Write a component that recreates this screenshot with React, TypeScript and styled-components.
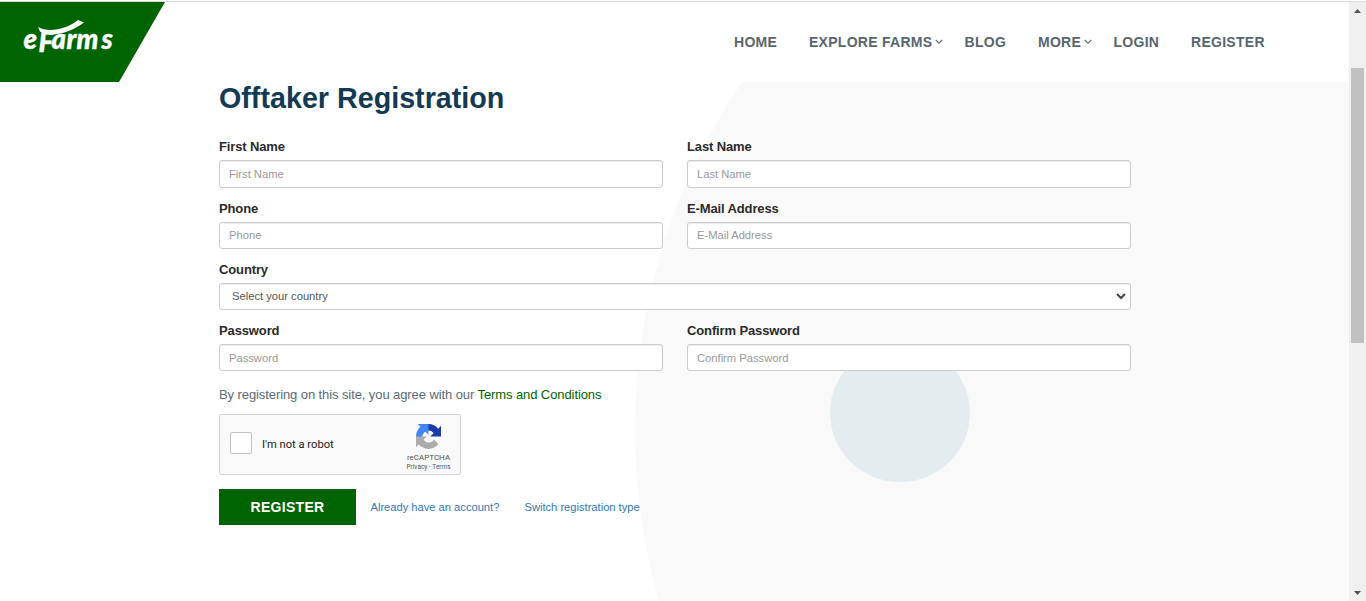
import React from "react";
import styled, { createGlobalStyle } from "styled-components";

const Global = createGlobalStyle`
  * { box-sizing: border-box; }
  html, body { margin: 0; height: 100%; overflow: hidden; }
  body { font-family: "Liberation Sans", Arial, sans-serif; background: #fff; }
  a { text-decoration: none; }
`;

const Window = styled.div`
  display: flex;
  width: 1366px;
  height: 600px;
  margin-top: 1px;
  border-top: 1px solid #dcdcdc;
  overflow: hidden;
`;
const Page = styled.div`
  flex: 1;
  display: flex;
  flex-direction: column;
`;
const Header = styled.header`
  display: flex;
  justify-content: space-between;
  align-items: flex-start;
  height: 80px;
  background: #fff;
`;
const Brand = styled.a`
  display: block;
  width: 165px;
  height: 80px;
  background: #006400;
  clip-path: polygon(0 0, 100% 0, 119px 100%, 0 100%);
`;
const Nav = styled.nav`
  display: flex;
  width: 615px;
  height: 80px;
  align-items: center;
`;
const NavLink = styled.a<{ $w: number }>`
  display: flex;
  align-items: center;
  flex: none;
  width: ${(p) => p.$w}px;
  font-size: 14px;
  font-weight: 700;
  letter-spacing: 0.28px;
  line-height: 20px;
  white-space: nowrap;
  color: #5a666e;
  svg { margin-left: 3px; }
`;
const Main = styled.main`
  position: relative;
  flex: 1;
  overflow: hidden;
`;
const Disc = styled.div<{ $x: number; $y: number; $rx: number; $ry: number; $color: string }>`
  position: absolute;
  left: ${(p) => p.$x - p.$rx}px;
  top: ${(p) => p.$y - p.$ry}px;
  width: ${(p) => p.$rx * 2}px;
  height: ${(p) => p.$ry * 2}px;
  border-radius: 50%;
  background: ${(p) => p.$color};
`;
const Form = styled.form`
  position: relative;
  width: 912px;
  margin-left: 219px;
`;
const Title = styled.h1`
  margin: 0 0 23px;
  height: 32px;
  line-height: 32px;
  font-size: 28.7px;
  font-weight: 700;
  color: #133a54;
  white-space: nowrap;
`;
const Fields = styled.div`
  display: grid;
  grid-template-columns: 1fr 1fr;
  column-gap: 24px;
  row-gap: 11px;
`;
const Field = styled.div<{ $wide?: boolean }>`
  grid-column: ${(p) => (p.$wide ? "1 / -1" : "auto")};
  display: flex;
  flex-direction: column;
  gap: 3px;
`;
const Label = styled.label`
  height: 20px;
  line-height: 20px;
  font-size: 13px;
  font-weight: 700;
  letter-spacing: -0.13px;
  color: #2b2b2b;
`;
const Input = styled.input<{ $tall?: boolean; $raised?: boolean }>`
  width: 100%;
  height: ${(p) => (p.$tall ? 28 : 27)}px;
  padding: ${(p) => (p.$raised ? "0 9px 1px" : "0 9px")};
  border: 1px solid #ccc;
  border-radius: 3px;
  background: #fff;
  box-shadow: inset 0 1px 1px rgba(0, 0, 0, 0.075);
  font: 11.2px "Liberation Sans", Arial, sans-serif;
  &::placeholder { color: #999; opacity: 1; }
`;
const Select = styled.div`
  display: flex;
  align-items: center;
  justify-content: space-between;
  height: 27px;
  padding: 0 4px 1px 12px;
  border: 1px solid #ccc;
  border-radius: 3px;
  background: #fff;
  box-shadow: inset 0 1px 1px rgba(0, 0, 0, 0.075);
  font-size: 11.2px;
  color: #555;
`;
const Agreement = styled.p`
  margin: 14px 0 9px;
  height: 20px;
  line-height: 20px;
  font-size: 13px;
  letter-spacing: -0.09px;
  color: #5a6b78;
  a { color: #006400; }
`;
const Captcha = styled.div`
  display: flex;
  align-items: center;
  width: 242px;
  height: 61px;
  padding: 0 6px 0 10px;
  border: 1px solid #d3d3d3;
  border-radius: 2px;
  background: #f9f9f9;
  font-family: Roboto, sans-serif;
`;
const CheckBox = styled.span`
  width: 22px;
  height: 22px;
  margin: -4px 10px 0 0;
  border: 1px solid #c1c1c1;
  border-radius: 2px;
  background: #fff;
`;
const CaptchaText = styled.span`
  flex: 1;
  font-size: 11.2px;
  color: #222;
`;
const CaptchaBrand = styled.div`
  display: flex;
  flex-direction: column;
  align-items: center;
  width: 51px;
  height: 59px;
  padding-top: 9px;
  color: #555;
`;
const BrandName = styled.span`
  margin-top: 4px;
  font-size: 8px;
  line-height: 10px;
`;
const Legal = styled.span`
  font-size: 6.4px;
  line-height: 9px;
  letter-spacing: 0.05px;
  white-space: nowrap;
`;
const Actions = styled.div`
  display: flex;
  align-items: center;
  margin-top: 14px;
  height: 36px;
`;
const Submit = styled.button`
  width: 137px;
  height: 36px;
  margin-right: 14.5px;
  padding: 0;
  border: 0;
  background: #006400;
  color: #fff;
  font: 700 14px "Liberation Sans", Arial, sans-serif;
  letter-spacing: 0.28px;
`;
const SmallLink = styled.a<{ $w?: number }>`
  width: ${(p) => (p.$w ? `${p.$w}px` : "auto")};
  font-size: 11.15px;
  color: #337ab7;
  white-space: nowrap;
`;
const ScrollBar = styled.div`
  display: flex;
  flex-direction: column;
  align-items: center;
  width: 17px;
  padding: 7px 0 6px;
  background: #f0f0f0;
`;
const Thumb = styled.div`
  width: 13px;
  height: 275px;
  margin: 55px 0 auto;
  background: #c1c1c1;
`;

const Chevron = () => (
  <svg width="8" height="6" viewBox="0 0 8 6" fill="none" stroke="#5a666e" strokeWidth="1.1">
    <path d="M0.8 1L4 4.3L7.2 1" />
  </svg>
);

const Logo = () => (
  <svg width="165" height="80" viewBox="0 2 165 80" fill="#fff">
    <text
      x="23.5 38.5 51.5 66.5 76.5 101.5"
      y="48.5 51.5 48.5 48.5 48.5 48.5"
      fontFamily="Lato, sans-serif"
      fontWeight="900"
      fontStyle="italic"
      fontSize="27.5"
      stroke="#fff"
      strokeWidth=".4"
    >
      eFarms
    </text>
    <path d="M38 27C47 32 64 31 78 20L84 22.5C70 33 58 34 53 34.5C48 35 43 33.5 40 31.5Z" />
  </svg>
);

const RecaptchaMark = () => (
  <svg width="25" height="25" viewBox="0 0 64 64">
    <path fill="#1c3aa9" d="M64 31.955l-.016-1.37V4.687l-7.16 7.16C50.965 4.674 42.033.093 32.05.093c-10.4 0-19.63 4.96-25.458 12.64l11.736 11.86a15.55 15.55 0 0 1 4.754-5.334c2.05-1.6 4.952-2.906 8.968-2.906.485 0 .86.057 1.135.163 4.976.393 9.288 3.14 11.828 7.124l-8.307 8.307L64 31.953" />
    <path fill="#4285f4" d="M31.862.094l-1.37.016H4.594l7.16 7.16C4.58 13.128 0 22.06 0 32.043c0 10.4 4.96 19.63 12.64 25.458L24.5 45.765a15.55 15.55 0 0 1-5.334-4.754c-1.6-2.05-2.906-4.952-2.906-8.968 0-.485.057-.86.163-1.135.393-4.976 3.14-9.288 7.124-11.828l8.307 8.307L31.86.095" />
    <path fill="#ababab" d="M.001 32.045l.016 1.37v25.898l7.16-7.16c5.86 7.173 14.79 11.754 24.774 11.754 10.4 0 19.63-4.96 25.458-12.64l-11.736-11.86a15.55 15.55 0 0 1-4.754 5.334c-2.05 1.6-4.952 2.906-8.968 2.906-.485 0-.86-.057-1.135-.163-4.976-.393-9.288-3.14-11.828-7.124l8.307-8.307L.002 32.047" />
  </svg>
);

interface TextFieldProps {
  name: string;
  tall?: boolean;
  raised?: boolean;
  type?: string;
}
const TextField = ({ name, tall, raised, type = "text" }: TextFieldProps) => (
  <Field>
    <Label>{name}</Label>
    <Input $tall={tall} $raised={raised} type={type} placeholder={name} />
  </Field>
);

const navItems = [
  { text: "HOME", width: 75 },
  { text: "EXPLORE FARMS", width: 155.5, menu: true },
  { text: "BLOG", width: 73.5 },
  { text: "MORE", width: 75.5, menu: true },
  { text: "LOGIN", width: 77.5 },
  { text: "REGISTER", width: 80 },
];

export default function App() {
  return (
    <>
      <Global />
      <Window>
        <Page>
          <Header>
            <Brand href="#" aria-label="eFarms"><Logo /></Brand>
            <Nav>
              {navItems.map((item) => (
                <NavLink key={item.text} href="#" $w={item.width}>
                  {item.text}
                  {item.menu && <Chevron />}
                </NavLink>
              ))}
            </Nav>
          </Header>
          <Main>
            <Disc $x={1254} $y={348} $rx={619} $ry={619} $color="#f9f9f9" />
            <Disc $x={900} $y={331} $rx={69.7} $ry={69} $color="#e4ecef" />
            <Form>
              <Title>Offtaker Registration</Title>
              <Fields>
                <TextField name="First Name" tall />
                <TextField name="Last Name" tall />
                <TextField name="Phone" raised />
                <TextField name="E-Mail Address" raised />
                <Field $wide>
                  <Label>Country</Label>
                  <Select>
                    Select your country
                    <svg width="10" height="7" viewBox="0 0 10 7" fill="none" stroke="#444" strokeWidth="2">
                      <path d="M1 1L5 5L9 1" />
                    </svg>
                  </Select>
                </Field>
                <TextField name="Password" type="password" />
                <TextField name="Confirm Password" type="password" />
              </Fields>
              <Agreement>
                By registering on this site, you agree with our <a href="#">Terms and Conditions</a>
              </Agreement>
              <Captcha>
                <CheckBox />
                <CaptchaText>I'm not a robot</CaptchaText>
                <CaptchaBrand>
                  <RecaptchaMark />
                  <BrandName>reCAPTCHA</BrandName>
                  <Legal>Privacy - Terms</Legal>
                </CaptchaBrand>
              </Captcha>
              <Actions>
                <Submit type="button">REGISTER</Submit>
                <SmallLink href="#" $w={154}>Already have an account?</SmallLink>
                <SmallLink href="#">Switch registration type</SmallLink>
              </Actions>
            </Form>
          </Main>
        </Page>
        <ScrollBar>
          <svg width="7" height="4" viewBox="0 0 7 4"><path d="M0 4L3.5 0L7 4Z" fill="#505050" /></svg>
          <Thumb />
          <svg width="7" height="4" viewBox="0 0 7 4"><path d="M0 0L3.5 4L7 0Z" fill="#505050" /></svg>
        </ScrollBar>
      </Window>
    </>
  );
}
